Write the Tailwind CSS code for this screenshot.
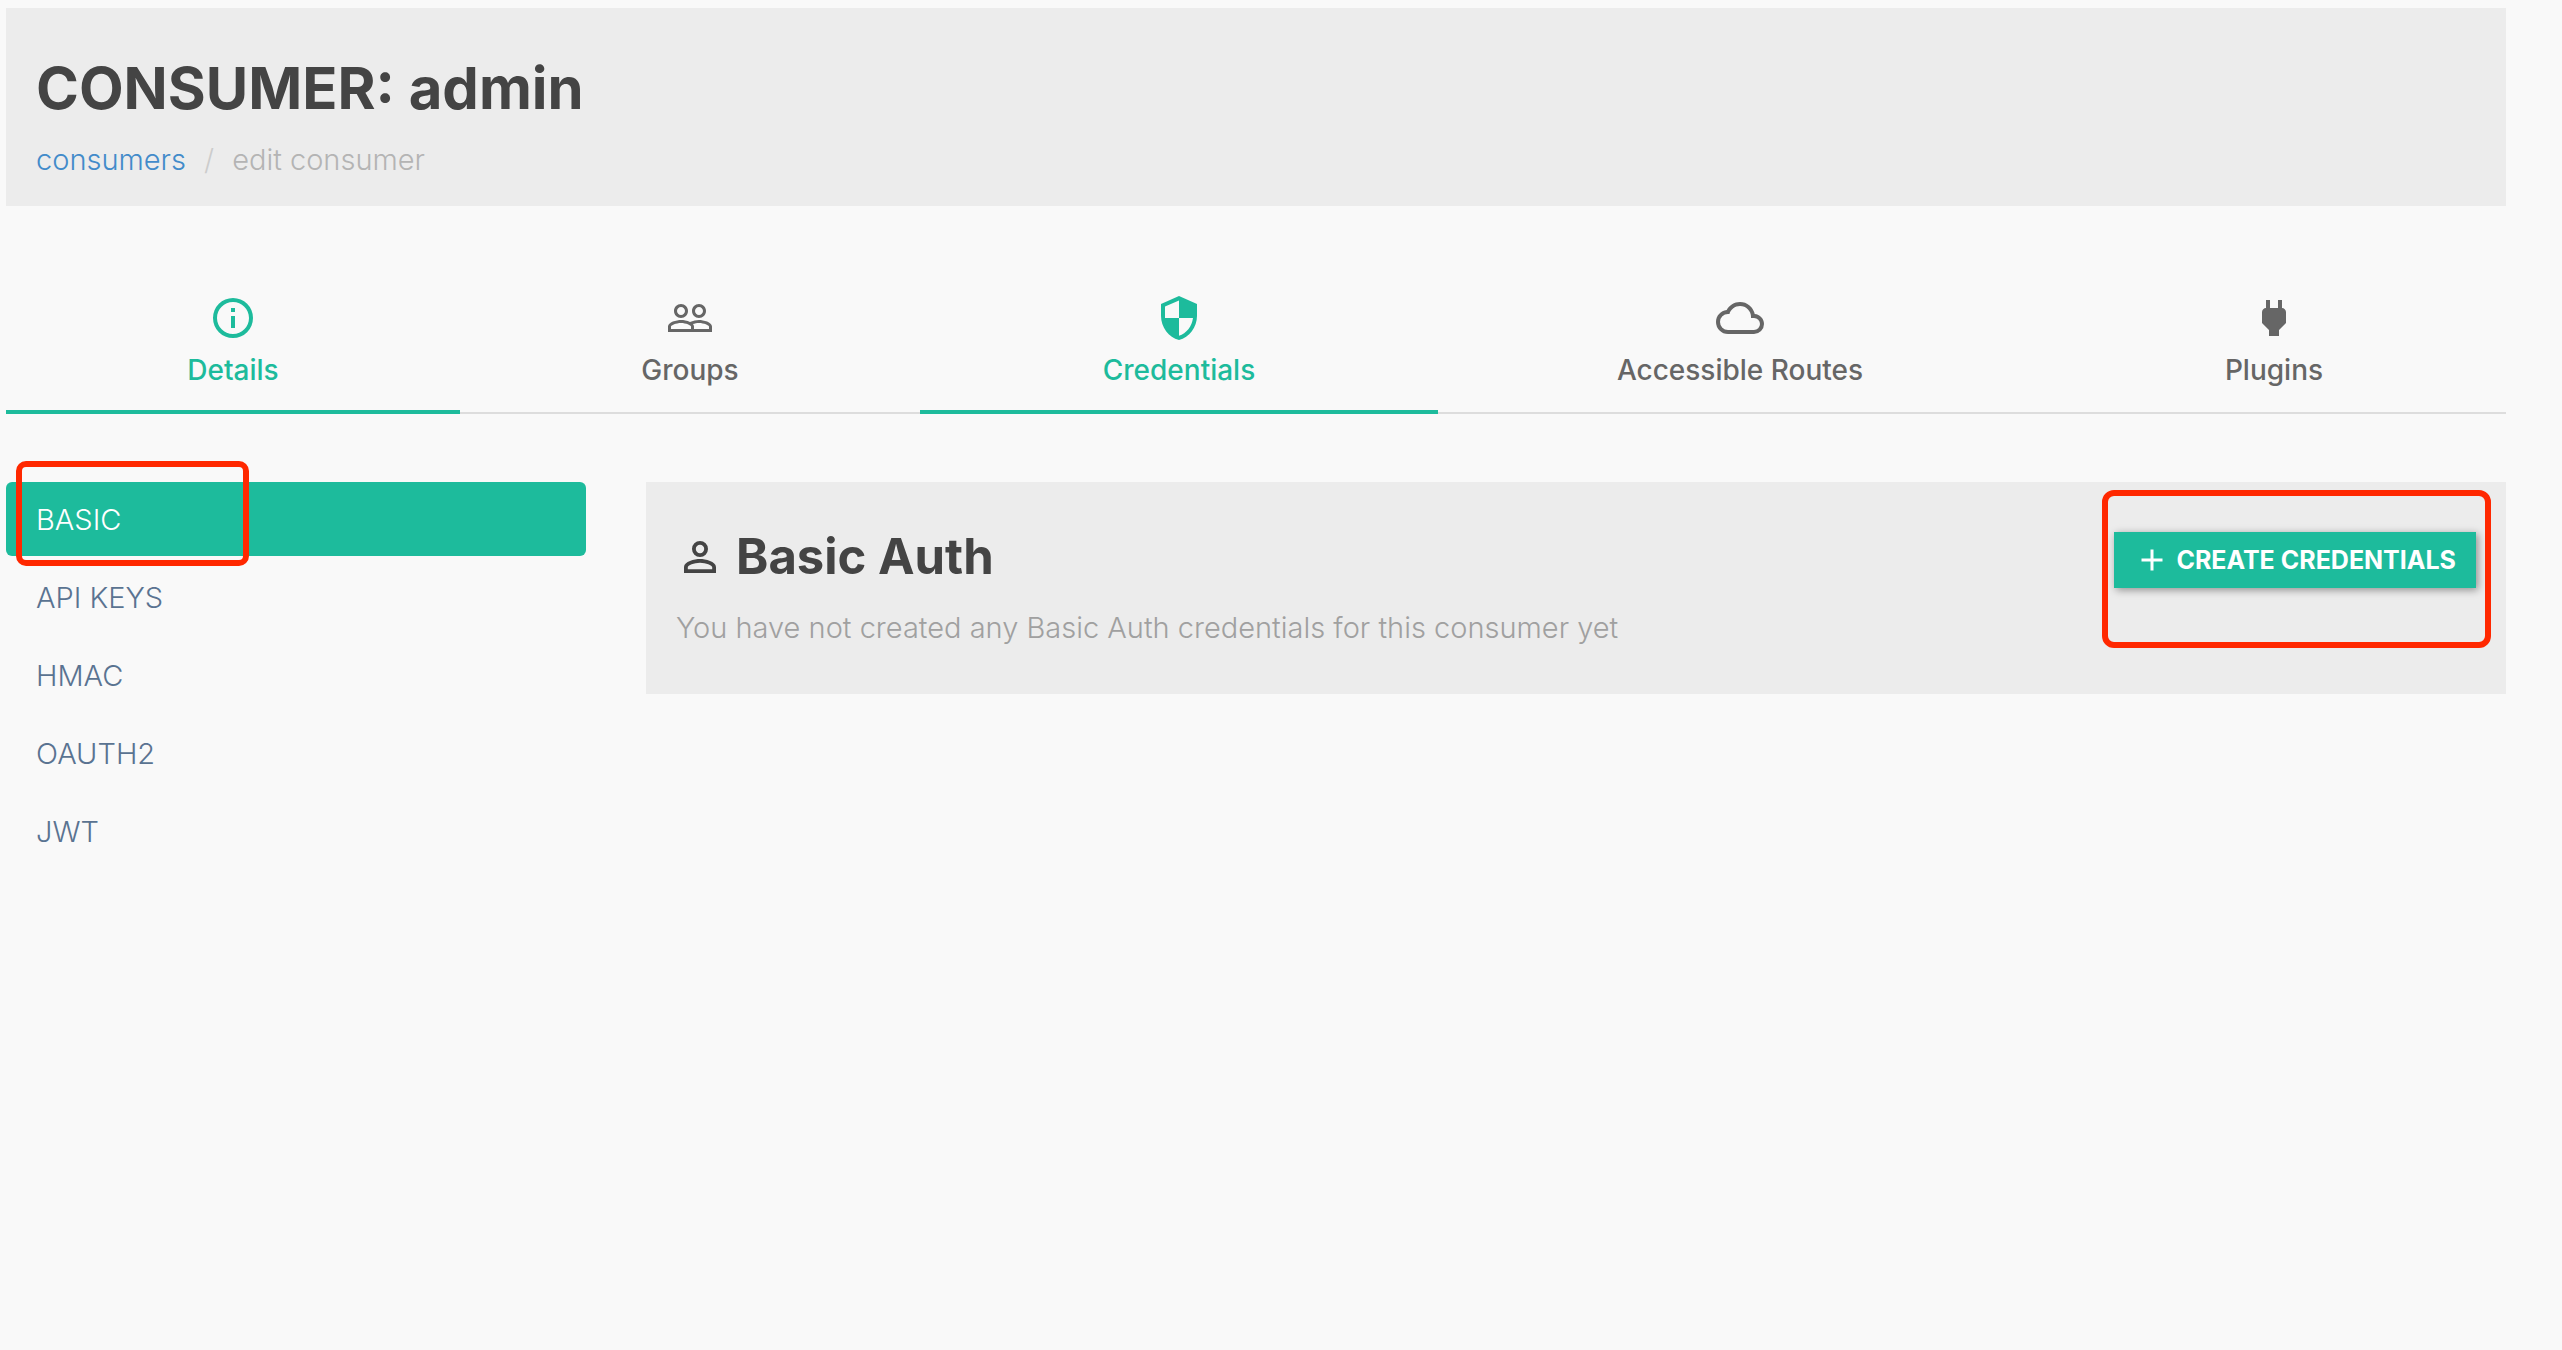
<!DOCTYPE html>
<html lang="en">
<head>
<meta charset="utf-8">
<title>Consumer: admin</title>
<script src="https://cdn.jsdelivr.net/npm/@tailwindcss/browser@4"></script>
</head>
<body class="min-h-screen bg-[#f9f9f9] pt-2 pr-14 pb-16 pl-1.5 font-[Inter,sans-serif] text-[29px] leading-10 text-[#444]">
  <header class="h-[198px] bg-[#ececec] px-[30px] pt-12">
    <h1 class="text-[58px] leading-16 font-bold">CONSUMER: admin</h1>
    <nav aria-label="Breadcrumb" class="mt-5 flex gap-[18px] font-light text-[#b4b4b4]">
      <a href="#" class="text-[#428bca]">consumers</a>
      <span class="text-[#ccc]">/</span>
      <span>edit consumer</span>
    </nav>
  </header>

  <nav aria-label="Consumer sections" class="mt-[72px] flex text-[28px] leading-10 font-medium text-[#666]">
    <a href="#" class="flex h-[136px] flex-[454] flex-col items-center gap-2 border-b-4 border-[#1dbb9c] pt-4 text-[#1dbb9c]">
      <svg class="size-12" viewBox="0 0 24 24" fill="currentColor"><path d="M11 9h2V7h-2m1 13c-4.41 0-8-3.59-8-8s3.59-8 8-8 8 3.59 8 8-3.59 8-8 8m0-18A10 10 0 0 0 2 12a10 10 0 0 0 10 10 10 10 0 0 0 10-10A10 10 0 0 0 12 2m-1 15h2v-6h-2v6z"/></svg>
      <span>Details</span>
    </a>
    <a href="#" class="flex h-[136px] flex-[460] flex-col items-center gap-2 border-b-2 border-[#ddd] pt-4">
      <svg class="size-12" viewBox="0 0 24 24" fill="currentColor"><path d="M16.5 13c-1.2 0-3.07.34-4.5 1-1.43-.67-3.3-1-4.5-1C5.33 13 1 14.08 1 16.25V19h22v-2.75c0-2.17-4.33-3.25-6.5-3.25zm-4 4.5h-10v-1.25c0-.54 2.56-1.75 5-1.75s5 1.21 5 1.75v1.25zm9 0H14v-1.25c0-.46-.2-.86-.52-1.22.88-.3 1.96-.53 3.02-.53 2.44 0 5 1.21 5 1.75v1.25zM7.5 12c1.93 0 3.500-1.570 3.500-3.500S9.430 5 7.500 5 4 6.570 4 8.500 5.570 12 7.500 12zm0-5.500c1.100 0 2 .9 2 2s-.9 2-2 2-2-.9-2-2 .9-2 2-2zm9 5.500c1.930 0 3.500-1.570 3.500-3.500S18.430 5 16.500 5 13 6.570 13 8.500s1.570 3.500 3.500 3.500zm0-5.500c1.100 0 2 .9 2 2s-.9 2-2 2-2-.9-2-2 .9-2 2-2z"/></svg>
      <span>Groups</span>
    </a>
    <a href="#" aria-current="page" class="flex h-[136px] flex-[518] flex-col items-center gap-2 border-b-4 border-[#1dbb9c] pt-4 text-[#1dbb9c]">
      <svg class="size-12" viewBox="0 0 24 24" fill="currentColor"><path d="M12 12h7c-.53 4.110-3.280 7.780-7 8.920V12H5V6.300l7-3.110M12 1 3 5v6c0 5.550 3.840 10.730 9 12 5.160-1.270 9-6.450 9-12V5l-9-4z"/></svg>
      <span>Credentials</span>
    </a>
    <a href="#" class="flex h-[136px] flex-[604] flex-col items-center gap-2 border-b-2 border-[#ddd] pt-4">
      <svg class="size-12" viewBox="0 0 24 24" fill="currentColor"><path d="M19 18H6a4 4 0 0 1-4-4 4 4 0 0 1 4-4h.71C7.370 7.690 9.500 6 12 6a5.500 5.500 0 0 1 5.500 5.500v.5H19a3 3 0 0 1 3 3 3 3 0 0 1-3 3m.35-7.970A7.490 7.490 0 0 0 12 4C9.110 4 6.600 5.640 5.350 8.030 2.340 8.360 0 10.900 0 14a6 6 0 0 0 6 6h13a5 5 0 0 0 5-5c0-2.640-2.050-4.780-4.650-4.970z"/></svg>
      <span>Accessible Routes</span>
    </a>
    <a href="#" class="flex h-[136px] flex-[464] flex-col items-center gap-2 border-b-2 border-[#ddd] pt-4">
      <svg class="size-12" viewBox="0 0 24 24" fill="currentColor"><path d="M16 7V3h-2v4h-4V3H8v4h-.01C7 6.990 6 7.990 6 8.990v5.490L9.500 18v3h5v-3l3.500-3.510v-5.500c0-1-1-2-2-1.990z"/></svg>
      <span>Plugins</span>
    </a>
  </nav>

  <div class="mt-[68px] grid grid-cols-[580fr_1860fr] items-start gap-[60px]">
    <nav aria-label="Credential types" class="flex flex-col gap-1 font-light text-[#5a7391]">
      <a href="#" aria-current="page" class="relative rounded-md bg-[#1dbb9c] px-[30px] pt-[18px] pb-4 text-white">BASIC
        <span class="absolute -top-[21px] left-2.5 h-[105px] w-[233px] rounded-[10px] border-6 border-[#ff2800]"></span>
      </a>
      <a href="#" class="px-[30px] pt-[18px] pb-4">API KEYS</a>
      <a href="#" class="px-[30px] pt-[18px] pb-4">HMAC</a>
      <a href="#" class="px-[30px] pt-[18px] pb-4">OAUTH2</a>
      <a href="#" class="px-[30px] pt-[18px] pb-4">JWT</a>
    </nav>

    <section class="relative flex h-[212px] items-start justify-between bg-[#ececec] px-[30px] pt-[50px]">
      <div>
        <h2 class="flex items-center gap-3 text-[49px] leading-[50px] font-bold">
          <svg class="size-12" viewBox="0 0 24 24" fill="currentColor"><path d="M12 13c-2.670 0-8 1.330-8 4v3h16v-3c0-2.670-5.330-4-8-4m0-9a4 4 0 0 0-4 4 4 4 0 0 0 4 4 4 4 0 0 0 4-4 4 4 0 0 0-4-4m0 10.900c2.970 0 6.100 1.460 6.100 2.100v1.100H5.900V17c0-.64 3.130-2.100 6.100-2.100m0-9A2.100 2.100 0 0 1 14.100 8a2.100 2.100 0 0 1-2.100 2.100A2.100 2.100 0 0 1 9.900 8 2.100 2.100 0 0 1 12 5.900z"/></svg>
          Basic Auth
        </h2>
        <p class="mt-[26px] font-light text-[#a0a0a0]">You have not created any Basic Auth credentials for this consumer yet</p>
      </div>
      <button type="button" class="flex h-14 items-center gap-1.5 bg-[#1dbb9c] px-5 text-[25px] font-bold text-white shadow-[2px_2px_8px_rgba(0,0,0,0.4)]">
        <svg class="size-9" viewBox="0 0 24 24" fill="currentColor"><path d="M19 13h-6v6h-2v-6H5v-2h6V5h2v6h6v2z"/></svg>
        CREATE CREDENTIALS
      </button>
      <span class="absolute top-2 right-[15px] h-[158px] w-[389px] rounded-xl border-6 border-[#ff2800]"></span>
    </section>
  </div>
</body>
</html>
